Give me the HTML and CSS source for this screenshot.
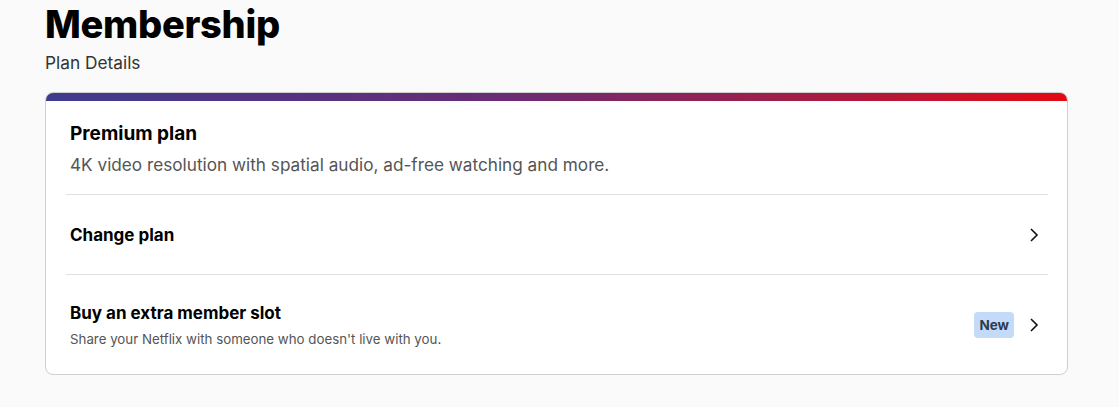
FILE: index.html
```html
<!DOCTYPE html>
<html lang="en">
<head>
    <meta charset="UTF-8">
    <meta name="viewport" content="width=device-width, initial-scale=1.0">
    <title>Membership</title>
    <link rel="stylesheet" href="styles.css">
</head>
<body>
    <main class="page">
        <h1 class="page-title">Membership</h1>
        <h2 class="page-subtitle">Plan Details</h2>

        <section class="plan-card">
            <div class="plan-bar"></div>

            <div class="plan-summary">
                <h3 class="plan-name">Premium plan</h3>
                <p class="plan-desc">4K video resolution with spatial audio, ad-free watching and more.</p>
            </div>

            <a class="plan-row" href="#">
                <div class="row-text">
                    <span class="row-title">Change plan</span>
                </div>
                <svg class="chevron" width="24" height="24" viewBox="0 0 24 24" fill="none">
                    <path d="M9 6l6 6-6 6" stroke="currentColor" stroke-width="1.6" fill="none"/>
                </svg>
            </a>

            <a class="plan-row plan-row-tall" href="#">
                <div class="row-text">
                    <span class="row-title">Buy an extra member slot</span>
                    <span class="row-sub">Share your Netflix with someone who doesn't live with you.</span>
                </div>
                <span class="badge">New</span>
                <svg class="chevron" width="24" height="24" viewBox="0 0 24 24" fill="none">
                    <path d="M9 6l6 6-6 6" stroke="currentColor" stroke-width="1.6" fill="none"/>
                </svg>
            </a>
        </section>
    </main>
</body>
</html>
```

FILE: styles.css
```css
body {
    margin: 0;
    background-color: #fafafa;
    font-family: Inter, "Noto Sans", Arial, sans-serif;
    color: #000;
}

.page {
    padding: 0 51px 0 45px;
}

.page-title {
    margin: 0;
    font-size: 38px;
    font-weight: 800;
    line-height: 48px;
    letter-spacing: -0.3px;
}

.page-subtitle {
    margin: 3px 0 18px;
    font-size: 17.3px;
    font-weight: 400;
    line-height: 23px;
    color: #333;
}

.plan-card {
    background: white;
    border: 1px solid #cfcfcf;
    border-radius: 8px;
    overflow: hidden;
}

.plan-bar {
    height: 8px;
    background: linear-gradient(90deg, #3f3b8e 0%, #6a2c75 45%, #b01a3c 80%, #e50914 100%);
}

.plan-summary {
    margin: 0 19px 0 20px;
    padding: 21px 4px 16px;
    border-bottom: 1px solid #e0e0e0;
}

.plan-name {
    margin: 0;
    font-size: 19px;
    font-weight: 700;
    line-height: 24px;
}

.plan-desc {
    margin: 6px 0 0;
    font-size: 17.2px;
    line-height: 26px;
    color: #555;
}

.plan-row {
    display: flex;
    align-items: center;
    gap: 8px;
    margin: 0 19px 0 20px;
    padding: 0 4px;
    height: 79px;
    color: #000;
    text-decoration: none;
    border-bottom: 1px solid #e0e0e0;
}

.plan-row-tall {
    height: 99px;
    border-bottom: none;
}

.row-text {
    flex: 1;
    display: flex;
    flex-direction: column;
    gap: 6px;
}

.row-title {
    font-size: 17px;
    font-weight: 700;
    line-height: 22px;
}

.row-sub {
    font-size: 13.3px;
    line-height: 18px;
    color: #555;
}

.badge {
    background-color: #c3dafa;
    color: #2d3a4f;
    font-size: 13.5px;
    font-weight: 700;
    padding: 4px 5px;
    border-radius: 4px;
    line-height: 18px;
}

.chevron {
    color: #111;
    flex-shrink: 0;
    margin-right: -2px;
}
```
